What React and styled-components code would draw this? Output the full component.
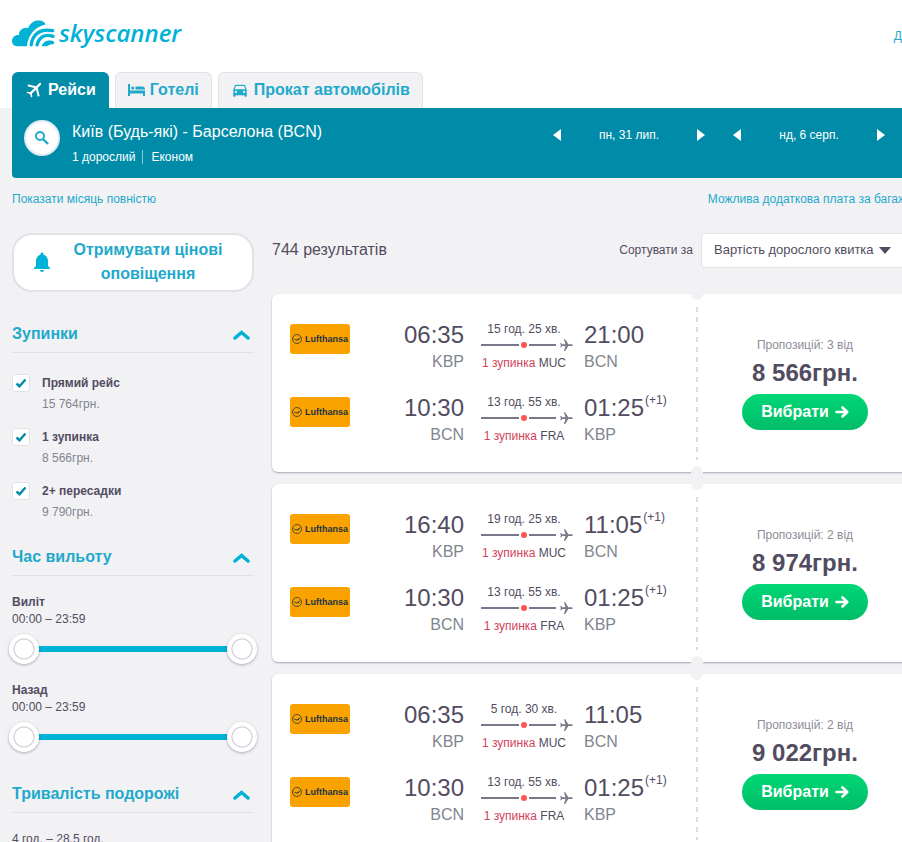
import React, { useState } from "react";
import styled, { createGlobalStyle, css } from "styled-components";
import { MdFlight, MdDirectionsCar, MdNotifications } from "react-icons/md";

const color = {
  page: "#f2f2f5",
  line: "#e1e1e8",
  brand: "#00b2d6",
  link: "#1fa9cb",
  panel: "#008ca8",
  ink: "#524c61",
  muted: "#81858f",
  rail: "#7b778a",
  danger: "#d1435b",
};

const GlobalStyle = createGlobalStyle`
  *, *::before, *::after { box-sizing: border-box; }
  html { overflow-x: hidden; }
  body {
    margin: 0;
    background: ${color.page};
    color: ${color.ink};
    font: 12px/16px "Liberation Sans", Arial, sans-serif;
  }
  button, select, input { font: inherit; color: inherit; margin: 0; }
  button { padding: 0; border: 0; background: none; cursor: pointer; }
  a { text-decoration: none; }
`;

const Page = styled.div`
  overflow: hidden;
`;

/* The results run a little past the right edge of a narrow window. */
const Shell = styled.div`
  margin: 0 -10px 0 12px;
`;

const Header = styled.header`
  background: #fff;
`;

const Brand = styled.div`
  display: flex;
  align-items: flex-end;
  justify-content: space-between;
  height: 72px;
  padding-bottom: 24px;
  margin-right: -25px;
`;

const Logo = styled.a`
  display: flex;
  align-items: flex-start;
  gap: 4px;
  color: ${color.brand};
  font: italic 600 24px/30px "Open Sans", sans-serif;

  svg {
    margin-top: 1px;
  }
`;

const TextLink = styled.a`
  color: ${color.link};
  white-space: nowrap;
`;

const TopLink = styled(TextLink)`
  padding-bottom: 4px;
`;

const Tabs = styled.nav`
  display: flex;
  gap: 6px;
`;

const Tab = styled.a`
  display: flex;
  align-items: center;
  gap: 5px;
  height: 36px;
  padding: 0 12px 2px;
  border: 1px solid ${color.line};
  border-bottom: 0;
  border-radius: 6px 6px 0 0;
  background: ${color.page};
  color: ${color.link};
  font-size: 16px;
  font-weight: 700;
  ${(p) =>
    p.$active &&
    css`
      background: ${color.panel};
      border-color: ${color.panel};
      color: #fff;
    `}
`;

const SearchPanel = styled.section`
  display: flex;
  gap: 12px;
  height: 70px;
  padding: 12px 27px 0 12px;
  border-radius: 0 0 4px 4px;
  background: ${color.panel};
  color: #fff;
`;

const SearchButton = styled.button`
  display: grid;
  place-items: center;
  width: 36px;
  height: 36px;
  border: 2px solid #dfeaf2;
  border-radius: 50%;
  background: #fff;
  color: ${color.link};
`;

const Route = styled.div`
  flex: 1;
`;

const RouteTitle = styled.h1`
  margin: 0 0 6px;
  font-size: 16px;
  line-height: 24px;
  font-weight: 400;
`;

const RouteMeta = styled.div`
  display: flex;
  line-height: 14px;

  span + span {
    margin-left: 7px;
    padding-left: 8px;
    border-left: 1px solid #8cc9d8;
  }
`;

const DatePickers = styled.div`
  display: flex;
  gap: 28px;
  padding-top: 7px;
  height: 32px;
`;

const DatePicker = styled.div`
  display: flex;
  align-items: center;
  justify-content: space-between;
  width: 152px;
  height: 16px;
`;

const Arrow = styled.button`
  width: 8px;
  height: 12px;
  background: #fff;
  clip-path: ${(p) =>
    p.$back ? "polygon(100% 0, 100% 100%, 0 50%)" : "polygon(0 0, 0 100%, 100% 50%)"};
`;

const Notes = styled.div`
  display: flex;
  justify-content: space-between;
  margin-right: 6px;
  padding-top: 13px;
`;

const Columns = styled.div`
  display: grid;
  grid-template-columns: 242px minmax(0, 1fr);
  gap: 18px;
  padding-top: 26px;
`;

const AlertButton = styled.button`
  display: flex;
  align-items: center;
  width: 100%;
  height: 59px;
  padding: 0 18px 2px 16px;
  border: 2px solid ${color.line};
  border-radius: 20px;
  background: #fff;
  color: ${color.link};
  font-size: 16px;
  line-height: 24px;
  font-weight: 700;

  svg {
    flex: none;
    width: 24px;
    height: 24px;
    color: ${color.brand};
  }
  span {
    flex: 1;
    padding-left: 8px;
  }
`;

const FilterSection = styled.section`
  padding-top: ${(p) => p.$space}px;
`;

const FilterHead = styled.button`
  display: flex;
  align-items: center;
  justify-content: space-between;
  width: 100%;
  height: 38px;
  padding-right: 4px;
  border-bottom: 1px solid ${color.line};
  color: ${color.link};
  font-size: 16px;
  font-weight: 700;

  svg {
    margin-top: 3px;
  }
`;

const FilterBody = styled.div`
  padding-top: ${(p) => p.$space}px;
`;

const StopOption = styled.label`
  display: grid;
  grid-template-columns: 18px 1fr;
  column-gap: 12px;
  height: 54px;
  cursor: pointer;
`;

const Tick = styled.span`
  display: grid;
  width: 18px;
  height: 18px;

  input,
  svg {
    grid-area: 1 / 1;
    place-self: center;
  }
  input {
    appearance: none;
    width: 18px;
    height: 18px;
    border: 1px solid ${color.line};
    border-radius: 3px;
    background: #fff;
  }
  svg {
    pointer-events: none;
    z-index: 1;
  }
  input:not(:checked) + svg {
    display: none;
  }
`;

const StopName = styled.div`
  font-weight: 700;
  line-height: 18px;
`;

const StopPrice = styled.div`
  color: ${color.muted};
  line-height: 24px;
`;

const TimeFilter = styled.div`
  height: 88px;
  line-height: 17px;
`;

const TimeName = styled.div`
  font-weight: 700;
  line-height: 18px;
`;

const Range = styled.div`
  display: grid;
  align-items: center;
  height: 30px;
  margin: 6px -3px 0;

  &::before {
    content: "";
    grid-area: 1 / 1;
    height: 6px;
    margin: 0 15px;
    background: ${color.brand};
  }
`;

const RangeInput = styled.input`
  grid-area: 1 / 1;
  width: 100%;
  height: 30px;
  appearance: none;
  background: none;
  pointer-events: none;

  &::-webkit-slider-thumb {
    appearance: none;
    width: 30px;
    height: 30px;
    border-radius: 50%;
    background: radial-gradient(circle, #fff 9px, #c8c8d0 10px, #fff 11px);
    box-shadow: 0 1px 3px rgba(60, 50, 80, 0.4);
    pointer-events: auto;
    cursor: pointer;
  }
`;

const ResultsHead = styled.div`
  display: flex;
  align-items: center;
  height: 35px;
  margin-bottom: 26px;
  line-height: 18px;

  label {
    padding-bottom: 2px;
  }
`;

const Count = styled.h2`
  flex: 1;
  margin: 0;
  padding-bottom: 2px;
  font-size: 16px;
  font-weight: 400;
`;

const SelectBox = styled.div`
  display: grid;
  align-items: center;
  width: 211px;
  margin-left: 8px;

  select,
  svg {
    grid-area: 1 / 1;
  }
  select {
    appearance: none;
    height: 35px;
    padding: 0 0 2px 12px;
    border: 1px solid ${color.line};
    border-radius: 4px;
    background: #fff;
    font-size: 13px;
  }
  svg {
    justify-self: end;
    margin-right: 21px;
    pointer-events: none;
  }
`;

const Card = styled.article`
  display: flex;
  height: 178px;
  margin-bottom: 12px;
  border-radius: 6px;
  background: #fff;
  box-shadow: 0 1px 2px rgba(60, 50, 80, 0.4);
`;

const Legs = styled.div`
  flex: 1;
  display: grid;
  align-content: start;
  gap: 21px;
  padding: 27px 0 0 18px;
`;

const Leg = styled.div`
  display: grid;
  grid-template-columns: 60px 1fr 100px 112px;
  column-gap: 10px;
  height: 52px;
`;

const Carrier = styled.div`
  display: flex;
  align-items: center;
  justify-content: space-between;
  height: 30px;
  margin-top: 3px;
  padding: 0 2px;
  border-radius: 3px;
  background: #f9a200;
  color: #1c3340;
  font-size: 9px;
  line-height: 12px;
  font-weight: 700;
`;

const Stop = styled.div`
  text-align: ${(p) => (p.$end ? "left" : "right")};
`;

const Time = styled.div`
  display: flex;
  justify-content: ${(p) => (p.$end ? "flex-start" : "flex-end")};
  height: 28px;
  font-size: 24px;
  line-height: 28px;
  white-space: nowrap;

  sup {
    margin-left: 1px;
    font-size: 12px;
    line-height: 12px;
    vertical-align: baseline;
  }
`;

const Code = styled.div`
  color: ${color.muted};
  font-size: 16px;
  line-height: 26px;
`;

const Middle = styled.div`
  text-align: center;
  white-space: nowrap;
`;

const Track = styled.div`
  display: flex;
  align-items: center;
  gap: 2px;
  height: 16px;
  padding-left: 7px;
  color: ${color.rail};

  svg {
    transform: rotate(90deg);
    margin-left: 1px;
  }
`;

const Rail = styled.span`
  width: ${(p) => p.$width}px;
  height: 2px;
  background: ${color.rail};
`;

const Dot = styled.span`
  width: 6px;
  height: 6px;
  border-radius: 50%;
  background: #ff5452;
`;

const Stops = styled.div`
  line-height: 20px;

  span {
    color: ${color.danger};
  }
`;

const Perforation = styled.div`
  position: relative;
  width: 2px;
  margin: 13px 0 12px;
  background: repeating-linear-gradient(#dcdce2 0 5px, transparent 5px 10px);

  &::before,
  &::after {
    content: "";
    position: absolute;
    left: -5px;
    width: 12px;
    height: 13px;
    border-radius: 6px;
    background: ${color.page};
  }
  &::before {
    top: -20px;
  }
  &::after {
    bottom: -19px;
  }
`;

const Fare = styled.div`
  display: flex;
  flex-direction: column;
  align-items: center;
  width: 214px;
  padding-top: 43px;
`;

const Offers = styled.div`
  color: #8e8c99;
`;

const Price = styled.div`
  margin: 5px 0 6px;
  font-size: 24px;
  line-height: 30px;
  font-weight: 700;
`;

const SelectButton = styled.button`
  display: flex;
  align-items: center;
  justify-content: center;
  gap: 6px;
  width: 126px;
  height: 36px;
  border-radius: 18px;
  background: linear-gradient(#00d775, #00bd68);
  color: #fff;
  font-size: 16px;
  font-weight: 700;
`;

const CloudMark = () => (
  <svg width="43" height="28" viewBox="0 0 130 84" aria-hidden="true">
    <path
      fill="currentColor"
      d="M14 82C5 81 0 74 0 66c0-11 9-19 21-18C21 33 35 23 49 27 55 11 68 3 82 4c9 0 16 5 20 12C72 21 49 45 45 82Z"
    />
    <g fill="none" stroke="currentColor" strokeWidth="10" strokeLinecap="round">
      <path d="M58 78C62 48 82 27 123 35" />
      <path d="M76 78c4-20 20-35 48-26" />
    </g>
    <path fill="currentColor" d="M90 82c3-13 17-21 33-16 8 3 5 11-2 10-8 0-12 6-20 6Z" />
  </svg>
);

const TabPlane = () => (
  <svg width="18" height="18" viewBox="0 0 18 18" aria-hidden="true">
    <g fill="none" stroke="currentColor" strokeLinecap="round" strokeLinejoin="round">
      <path d="M15 3 5.500 12.500" strokeWidth="2.400" />
      <path d="M11.500 6.500 3.500 4.500M11.500 6.500 13.500 14.500" strokeWidth="2" />
      <path d="M6 12 2.500 11.500M6 12 6.500 15.500" strokeWidth="1.600" />
    </g>
  </svg>
);

const Bed = () => (
  <svg width="17" height="12" viewBox="0 0 17 12" fill="currentColor" aria-hidden="true">
    <path d="M0 0h2v6.500h15V12h-2V9.500H2V12H0Z" />
    <circle cx="4.800" cy="4" r="1.600" />
    <path d="M7.500 2.500H14a3 3 0 0 1 3 3H7.500Z" />
  </svg>
);

const SearchGlass = () => (
  <svg width="14" height="14" viewBox="0 0 14 14" aria-hidden="true">
    <g fill="none" stroke="currentColor" strokeWidth="2">
      <circle cx="5" cy="5" r="4" />
      <path d="m8 8 5 5" strokeWidth="2.400" />
    </g>
  </svg>
);

const Chevron = () => (
  <svg width="17" height="10" viewBox="0 0 17 10" aria-hidden="true">
    <path
      d="M2 8 8.500 2.500 15 8"
      fill="none"
      stroke={color.brand}
      strokeWidth="3.500"
      strokeLinecap="round"
    />
  </svg>
);

const CheckMark = () => (
  <svg width="12" height="10" viewBox="0 0 12 10" aria-hidden="true">
    <path d="M1.500 5.500 4.500 8.200 10.500 1.500" fill="none" stroke={color.panel} strokeWidth="2.400" />
  </svg>
);

const ArrowRight = () => (
  <svg width="14" height="12" viewBox="0 0 14 12" aria-hidden="true">
    <path
      d="M1.500 6H12M7.500 1.500 12.200 6 7.500 10.500"
      fill="none"
      stroke="currentColor"
      strokeWidth="2.600"
      strokeLinecap="round"
      strokeLinejoin="round"
    />
  </svg>
);

const Crane = () => (
  <svg width="10" height="10" viewBox="0 0 20 20" aria-hidden="true">
    <circle cx="10" cy="10" r="9" fill="none" stroke="currentColor" strokeWidth="1.500" />
    <path
      d="M2 9c4 0 5 3 8 2l8-5-5 6c-3 2-6 1-11-3Z"
      fill="currentColor"
    />
  </svg>
);

const stopOptions = [
  ["Прямий рейс", "15 764грн."],
  ["1 зупинка", "8 566грн."],
  ["2+ пересадки", "9 790грн."],
];

const back = { from: "10:30", fromCode: "BCN", length: "13 год. 55 хв.", via: "FRA", to: "01:25", toCode: "KBP", next: true };
const out = (from, length, to, next) => ({ from, fromCode: "KBP", length, via: "MUC", to, toCode: "BCN", next });

const results = [
  { offers: 3, price: "8 566грн.", legs: [out("06:35", "15 год. 25 хв.", "21:00"), back] },
  { offers: 2, price: "8 974грн.", legs: [out("16:40", "19 год. 25 хв.", "11:05", true), back] },
  { offers: 2, price: "9 022грн.", legs: [out("06:35", "5 год. 30 хв.", "11:05"), back] },
];

function Filter({ title, space, bodySpace, children }) {
  const [open, setOpen] = useState(true);
  return (
    <FilterSection $space={space}>
      <FilterHead type="button" aria-expanded={open} onClick={() => setOpen(!open)}>
        {title}
        <Chevron />
      </FilterHead>
      {open && <FilterBody $space={bodySpace}>{children}</FilterBody>}
    </FilterSection>
  );
}

function TimeRange({ name }) {
  return (
    <TimeFilter>
      <TimeName>{name}</TimeName>
      <div>00:00 – 23:59</div>
      <Range>
        <RangeInput type="range" aria-label={`${name}: від`} min="0" max="1439" defaultValue="0" />
        <RangeInput type="range" aria-label={`${name}: до`} min="0" max="1439" defaultValue="1439" />
      </Range>
    </TimeFilter>
  );
}

function DateStepper({ label }) {
  return (
    <DatePicker>
      <Arrow $back type="button" aria-label="Попередній день" />
      {label}
      <Arrow type="button" aria-label="Наступний день" />
    </DatePicker>
  );
}

function FlightLeg({ leg }) {
  return (
    <Leg>
      <Carrier>
        <Crane />
        Lufthansa
      </Carrier>
      <Stop>
        <Time>{leg.from}</Time>
        <Code>{leg.fromCode}</Code>
      </Stop>
      <Middle>
        {leg.length}
        <Track>
          <Rail $width={38} />
          <Dot />
          <Rail $width={28} />
          <MdFlight size={15} />
        </Track>
        <Stops>
          <span>1 зупинка</span> {leg.via}
        </Stops>
      </Middle>
      <Stop $end>
        <Time $end>
          {leg.to}
          {leg.next && <sup>(+1)</sup>}
        </Time>
        <Code>{leg.toCode}</Code>
      </Stop>
    </Leg>
  );
}

export default function App() {
  return (
    <Page>
      <GlobalStyle />
      <Header>
        <Shell>
          <Brand>
            <Logo href="#">
              <CloudMark />
              skyscanner
            </Logo>
            <TopLink href="#">Довідка</TopLink>
          </Brand>
          <Tabs>
            <Tab href="#" $active>
              <TabPlane />
              Рейси
            </Tab>
            <Tab href="#">
              <Bed />
              Готелі
            </Tab>
            <Tab href="#">
              <MdDirectionsCar size={18} />
              Прокат автомобілів
            </Tab>
          </Tabs>
        </Shell>
      </Header>
      <Shell>
        <SearchPanel>
          <SearchButton type="button" aria-label="Змінити пошук">
            <SearchGlass />
          </SearchButton>
          <Route>
            <RouteTitle>Київ (Будь-які) - Барселона (BCN)</RouteTitle>
            <RouteMeta>
              <span>1 дорослий</span>
              <span>Економ</span>
            </RouteMeta>
          </Route>
          <DatePickers>
            <DateStepper label="пн, 31 лип." />
            <DateStepper label="нд, 6 серп." />
          </DatePickers>
        </SearchPanel>
        <Notes>
          <TextLink href="#">Показати місяць повністю</TextLink>
          <TextLink href="#">Можлива додаткова плата за багаж</TextLink>
        </Notes>
        <Columns>
          <aside>
            <AlertButton type="button">
              <MdNotifications />
              <span>Отримувати цінові оповіщення</span>
            </AlertButton>
            <Filter title="Зупинки" space={23} bodySpace={21}>
              {stopOptions.map(([name, price]) => (
                <StopOption key={name}>
                  <Tick>
                    <input type="checkbox" defaultChecked />
                    <CheckMark />
                  </Tick>
                  <div>
                    <StopName>{name}</StopName>
                    <StopPrice>{price}</StopPrice>
                  </div>
                </StopOption>
              ))}
            </Filter>
            <Filter title="Час вильоту" space={2} bodySpace={17}>
              <TimeRange name="Виліт" />
              <TimeRange name="Назад" />
            </Filter>
            <Filter title="Тривалість подорожі" space={6} bodySpace={18}>
              4 год. – 28,5 год.
            </Filter>
          </aside>
          <main>
            <ResultsHead>
              <Count>744 результатів</Count>
              <label htmlFor="sort">Сортувати за</label>
              <SelectBox>
                <select id="sort">
                  <option>Вартість дорослого квитка</option>
                </select>
                <svg width="12" height="7" viewBox="0 0 12 7" aria-hidden="true">
                  <path d="M0 0h12L6 7Z" fill={color.ink} />
                </svg>
              </SelectBox>
            </ResultsHead>
            {results.map((r) => (
              <Card key={r.price}>
                <Legs>
                  {r.legs.map((leg) => (
                    <FlightLeg key={leg.fromCode} leg={leg} />
                  ))}
                </Legs>
                <Perforation />
                <Fare>
                  <Offers>Пропозицій: {r.offers} від</Offers>
                  <Price>{r.price}</Price>
                  <SelectButton type="button">
                    Вибрати
                    <ArrowRight />
                  </SelectButton>
                </Fare>
              </Card>
            ))}
          </main>
        </Columns>
      </Shell>
    </Page>
  );
}
